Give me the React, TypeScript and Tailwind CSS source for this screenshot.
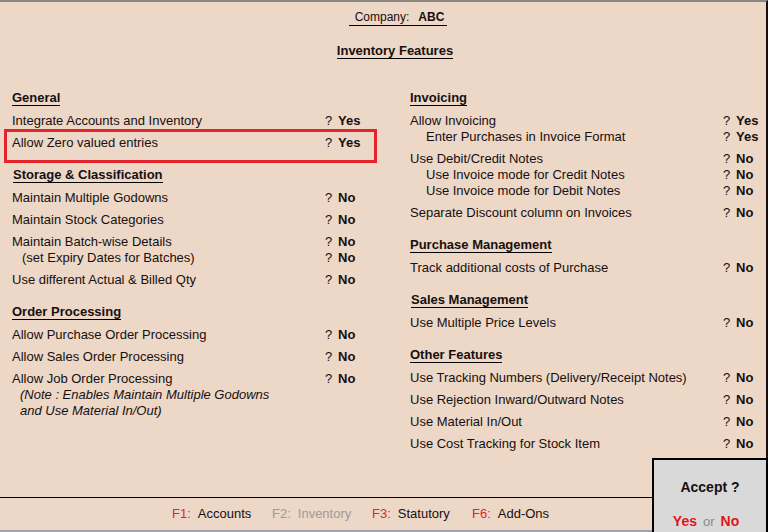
import React from 'react';

type Row = {
    label: string;
    value?: string;
    indent?: 'sub' | 'note' | 'set';
    gap: 0 | 6 | 7;
    italic?: boolean;
    mark?: boolean;
};

type Section = { title: string; gap: 0 | 16; shift?: boolean; rows: Row[] };

const gapClass = { 0: 'mt-0', 6: 'mt-[6px]', 7: 'mt-[7px]', 16: 'mt-[16px]' };

const left: Section[] = [
    {
        title: 'General',
        gap: 0,
        rows: [
            { label: 'Integrate Accounts and Inventory', value: 'Yes', gap: 7 },
            { label: 'Allow Zero valued entries', value: 'Yes', gap: 6, mark: true },
        ],
    },
    {
        title: 'Storage & Classification',
        gap: 16,
        shift: true,
        rows: [
            { label: 'Maintain Multiple Godowns', value: 'No', gap: 7 },
            { label: 'Maintain Stock Categories', value: 'No', gap: 6 },
            { label: 'Maintain Batch-wise Details', value: 'No', gap: 6 },
            { label: '(set Expiry Dates for Batches)', value: 'No', gap: 0, indent: 'set' },
            { label: 'Use different Actual & Billed Qty', value: 'No', gap: 6 },
        ],
    },
    {
        title: 'Order Processing',
        gap: 16,
        rows: [
            { label: 'Allow Purchase Order Processing', value: 'No', gap: 7 },
            { label: 'Allow Sales Order Processing', value: 'No', gap: 6 },
            { label: 'Allow Job Order Processing', value: 'No', gap: 6 },
            { label: '(Note : Enables Maintain Multiple Godowns', gap: 0, indent: 'note', italic: true },
            { label: 'and Use Material In/Out)', gap: 0, indent: 'note', italic: true },
        ],
    },
];

const right: Section[] = [
    {
        title: 'Invoicing',
        gap: 0,
        rows: [
            { label: 'Allow Invoicing', value: 'Yes', gap: 7 },
            { label: 'Enter Purchases in Invoice Format', value: 'Yes', gap: 0, indent: 'sub' },
            { label: 'Use Debit/Credit Notes', value: 'No', gap: 6 },
            { label: 'Use Invoice mode for Credit Notes', value: 'No', gap: 0, indent: 'sub' },
            { label: 'Use Invoice mode for Debit Notes', value: 'No', gap: 0, indent: 'sub' },
            { label: 'Separate Discount column on Invoices', value: 'No', gap: 6 },
        ],
    },
    {
        title: 'Purchase Management',
        gap: 16,
        rows: [{ label: 'Track additional costs of Purchase', value: 'No', gap: 7 }],
    },
    {
        title: 'Sales Management',
        gap: 16,
        shift: true,
        rows: [{ label: 'Use Multiple Price Levels', value: 'No', gap: 7 }],
    },
    {
        title: 'Other Features',
        gap: 16,
        rows: [
            { label: 'Use Tracking Numbers (Delivery/Receipt Notes)', value: 'No', gap: 7 },
            { label: 'Use Rejection Inward/Outward Notes', value: 'No', gap: 6 },
            { label: 'Use Material In/Out', value: 'No', gap: 6 },
            { label: 'Use Cost Tracking for Stock Item', value: 'No', gap: 6 },
        ],
    },
];

const indentClass = { sub: 'pl-[16px]', set: 'pl-[10px]', note: 'pl-[8px]' };

const FeatureRow = ({ row }: { row: Row }) => (
    <div className={`relative flex h-[16px] leading-[16px] ${gapClass[row.gap]}`}>
        <div
            className={`w-[313px] shrink-0 whitespace-nowrap ${row.indent ? indentClass[row.indent] : ''} ${
                row.italic ? 'italic' : ''
            }`}
        >
            {row.label}
        </div>
        {row.value && (
            <>
                <span className="w-[13px]">?</span>
                <span className="font-bold">{row.value}</span>
            </>
        )}
        {row.mark && (
            <div className="absolute -left-[8px] -top-[6px] h-[34px] w-[373px] border-[3px] border-[#e3242b]" />
        )}
    </div>
);

const Column = ({ sections }: { sections: Section[] }) => (
    <div className="flex flex-col">
        {sections.map((s) => (
            <div key={s.title} className={gapClass[s.gap]}>
                <div
                    className={`w-fit border-b border-black text-[13px] font-bold leading-[15px] ${
                        s.shift ? 'ml-px' : ''
                    }`}
                >
                    {s.title}
                </div>
                {s.rows.map((r) => (
                    <FeatureRow key={r.label} row={r} />
                ))}
            </div>
        ))}
    </div>
);

const keys = [
    { k: 'F1:', label: 'Accounts', dim: false },
    { k: 'F2:', label: 'Inventory', dim: true },
    { k: 'F3:', label: 'Statutory', dim: false },
    { k: 'F6:', label: 'Add-Ons', dim: false },
];

export default function App() {
    return (
        <div className="relative h-[532px] w-[768px] overflow-hidden bg-[#edd7c6] font-['Liberation_Sans',Arial,sans-serif] text-[13px] text-[#161010]">
            <div className="h-[498px] border-t-2 border-r-2 border-b border-t-[#8c8682] border-r-[#1a0d0d] border-b-black">
                <div className="mt-[8px] flex h-[16px] justify-center pl-[30px]">
                    <div className="border-b border-black pl-[6px] pr-[3px] text-[12px] leading-[15px]">
                        Company:<span className="ml-[9px] font-bold">ABC</span>
                    </div>
                </div>
                <div className="mt-[17px] flex h-[16px] justify-center pl-[24px]">
                    <div className="border-b border-black font-bold leading-[15px]">Inventory Features</div>
                </div>
                <div className="mt-[31px] grid grid-cols-[398px_1fr] pl-[12px]">
                    <Column sections={left} />
                    <Column sections={right} />
                </div>
            </div>
            <div className="flex h-[32px] items-center pl-[172px]">
                {keys.map((f) => (
                    <div key={f.k} className="flex w-[100px] whitespace-nowrap">
                        <span className={f.dim ? 'text-[#a09a98]' : 'text-[#e3242b]'}>{f.k}</span>
                        <span className={`ml-[7px] ${f.dim ? 'text-[#a09a98]' : ''}`}>{f.label}</span>
                    </div>
                ))}
            </div>
            <div className="h-[2px] bg-[#9ea4b0]" />
            <div className="absolute left-[652px] top-[458px] flex h-[74px] w-[116px] flex-col items-center border-x-2 border-t-2 border-black bg-[#d9d9d9]">
                <div className="mt-[19px] text-[14px] font-bold leading-[16px]">Accept ?</div>
                <div className="mt-[18px] -ml-[8px] flex items-baseline leading-[16px]">
                    <span className="text-[14px] font-bold text-[#e3141b]">Yes</span>
                    <span className="mx-[6px] text-[13px] text-[#8a8a8a]">or</span>
                    <span className="text-[14px] font-bold text-[#e3141b]">No</span>
                </div>
            </div>
        </div>
    );
}
